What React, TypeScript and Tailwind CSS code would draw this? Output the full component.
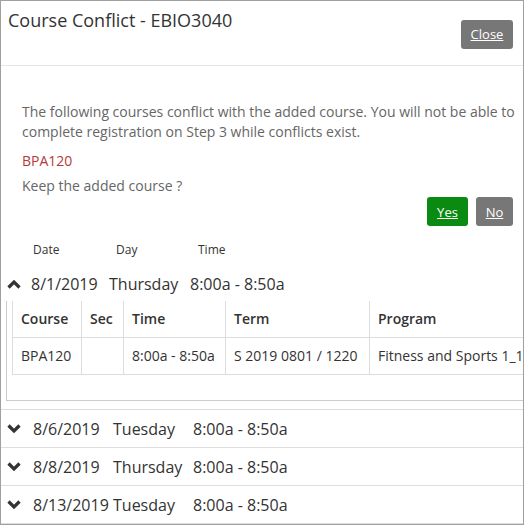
import React from 'react';

const Chevron = ({ up }: { up?: boolean }) => (
  <svg width="14" height="10" viewBox="0 0 14 10" className="shrink-0">
    <polyline
      points={up ? '1.5,8.5 7,3 12.5,8.5' : '1.5,1.5 7,7 12.5,1.5'}
      fill="none"
      stroke="#333"
      strokeWidth="3.2"
      strokeLinecap="butt"
      strokeLinejoin="miter"
    />
  </svg>
);

const meetings = [
  { date: '8/6/2019', day: 'Tuesday', time: '8:00a - 8:50a' },
  { date: '8/8/2019', day: 'Thursday', time: '8:00a - 8:50a' },
  { date: '8/13/2019', day: 'Tuesday', time: '8:00a - 8:50a' },
];

export default function App() {
  return (
    <div className="w-[524px] h-[525px] border border-[#a0a0a0] bg-white overflow-hidden font-['Open_Sans',sans-serif] text-[#333]">
      {/* Header */}
      <div className="flex justify-between h-[65px] border-b border-[#e5e5e5] pl-[7px] pr-[10px]">
        <h1 className="text-[18px] leading-[24px] mt-[7px] text-[#333]">Course Conflict - EBIO3040</h1>
        <button className="mt-[19px] w-[52px] h-[29px] rounded-[3px] bg-[#777] text-white text-[13px] underline">
          Close
        </button>
      </div>

      {/* Message */}
      <div className="pl-[21px] pr-[8px] pt-[36px] text-[14px] leading-[20px] text-[#666]">
        <p>The following courses conflict with the added course. You will not be able to complete registration on Step 3 while conflicts exist.</p>
        <p className="mt-[9px] text-[#b33a3a]">BPA120</p>
        <p className="mt-[5px]">Keep the added course ?</p>
        <div className="flex justify-end gap-[8px] mt-[1px] pr-[2px]">
          <button className="w-[41px] h-[29px] rounded-[3px] bg-[#0b8a12] text-white text-[13px] underline">Yes</button>
          <button className="w-[37px] h-[29px] rounded-[3px] bg-[#777] text-white text-[13px] underline">No</button>
        </div>
      </div>

      {/* Column labels */}
      <div className="flex pl-[32px] mt-[15px] text-[12px] leading-[18px] text-[#333]">
        <span className="w-[83px]">Date</span>
        <span className="w-[82px]">Day</span>
        <span>Time</span>
      </div>

      {/* Expanded meeting */}
      <div className="border-b border-[#ddd] pb-[8px] mt-[8px]">
        <div className="flex items-center h-[34px] pl-[6px] text-[16px]">
          <Chevron up />
          <span className="ml-[10px] w-[78px]">8/1/2019</span>
          <span className="w-[81px]">Thursday</span>
          <span>8:00a - 8:50a</span>
        </div>
        <div className="ml-[5px] w-[600px] h-[100px] border-l border-b border-[#ccc] pl-[5px]">
          <table className="border-collapse text-[14px] text-[#333]">
            <thead>
              <tr className="h-[36px]">
                <th className="w-[69px] text-left font-semibold px-[8px] border-l border-r border-b border-[#ddd]">Course</th>
                <th className="w-[42px] text-left font-semibold px-[8px] border-r border-b border-[#ddd]">Sec</th>
                <th className="w-[102px] text-left font-semibold px-[8px] border-r border-b border-[#ddd]">Time</th>
                <th className="w-[144px] text-left font-semibold px-[8px] border-r border-b border-[#ddd]">Term</th>
                <th className="w-[230px] text-left font-semibold px-[8px] border-r border-b border-[#ddd]">Program</th>
              </tr>
            </thead>
            <tbody>
              <tr className="h-[37px]">
                <td className="px-[8px] border border-[#ddd] whitespace-nowrap">BPA120</td>
                <td className="px-[8px] border border-[#ddd]"></td>
                <td className="px-[8px] border border-[#ddd] whitespace-nowrap">8:00a - 8:50a</td>
                <td className="px-[8px] border border-[#ddd] whitespace-nowrap">S 2019 0801 / 1220</td>
                <td className="px-[8px] border border-[#ddd] whitespace-nowrap">Fitness and Sports 1_1</td>
              </tr>
            </tbody>
          </table>
        </div>
      </div>

      {/* Collapsed meetings */}
      {meetings.map((m) => (
        <div key={m.date} className="flex items-center h-[38px] pl-[6px] border-b border-[#ddd] text-[16px]">
          <Chevron />
          <span className="ml-[12px] w-[80px]">{m.date}</span>
          <span className="w-[80px]">{m.day}</span>
          <span>{m.time}</span>
        </div>
      ))}
    </div>
  );
}
